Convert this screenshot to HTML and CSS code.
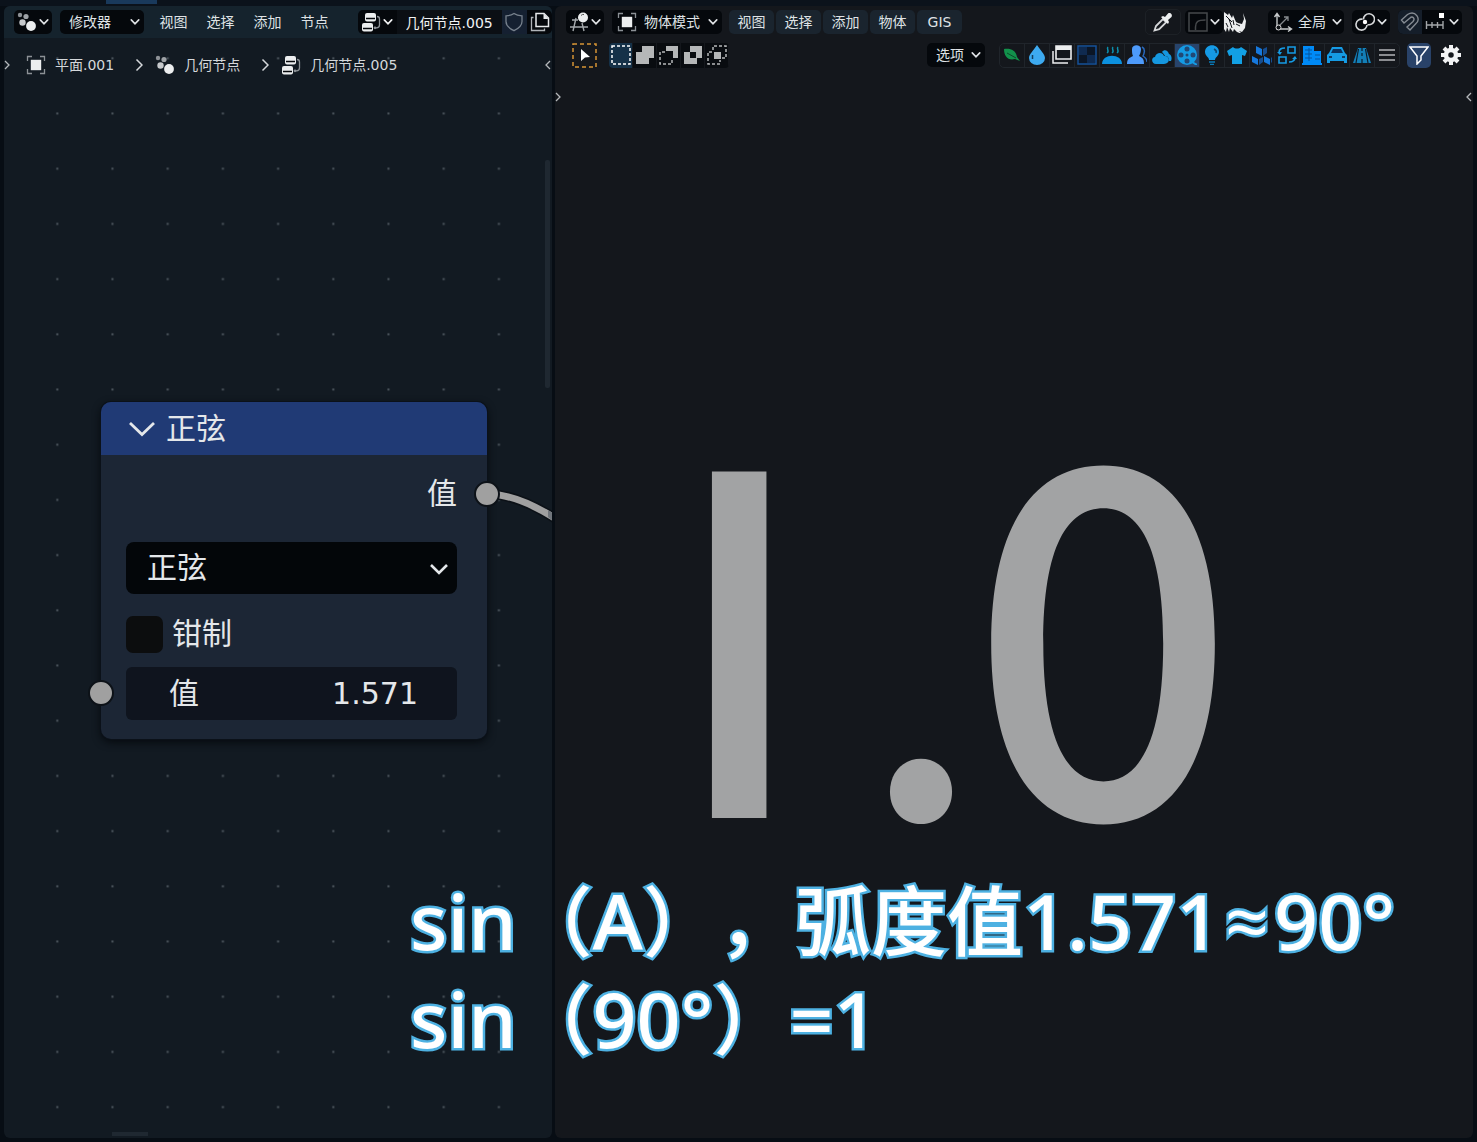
FILE: index.html
```html
<!DOCTYPE html>
<html lang="zh-CN">
<head>
<meta charset="utf-8">
<title>几何节点 - 正弦</title>
<meta name="viewport" content="width=device-width, initial-scale=1">
<link rel="stylesheet" href="styles.css">
</head>
<body>
<svg class="defs" aria-hidden="true">
  <symbol id="chev" viewBox="0 0 8 8"><path d="M1 2.3 4 5.4 7 2.3" fill="none" stroke="currentColor" stroke-width="1.3" stroke-linecap="round"/></symbol>
  <symbol id="right" viewBox="0 0 8 14"><path d="M1.5 1.5 7 7 1.5 12.500" fill="none" stroke="currentColor" stroke-width="1.500"/></symbol>
  <symbol id="geo" viewBox="0 0 20 20"><circle cx="3" cy="3" r="2.200" fill="#8d9196"/><circle cx="9" cy="4.500" r="2.600" fill="#9ea2a6"/><circle cx="5.500" cy="10.500" r="3.200" fill="#c6c9cc"/><circle cx="14" cy="14" r="4.900" fill="#eceeef"/></symbol>
  <symbol id="object" viewBox="0 0 20 20"><path d="M1.500 6V1.500H6M14 1.500h4.500V6M18.500 14v4.500H14M6 18.500H1.500V14" fill="none" stroke="#8c9196" stroke-width="1.300"/><rect x="4.800" y="4.800" width="10.400" height="10.400" fill="#eceeef"/></symbol>
  <symbol id="tree" viewBox="0 0 20 20"><rect x="4" y="1" width="11" height="8.500" rx="2" fill="#eceeef"/><rect x="1" y="11" width="11" height="8.500" rx="2" fill="#eceeef"/><path d="M5 6.500h9M2 16.500h9" stroke="#06090c" stroke-width="1.300"/><path d="M16 4.500c2 0 2.500.800 2.500 2.500v6c0 2-.800 2.800-3 2.800H14" fill="none" stroke="#8c9196" stroke-width="1.300"/><circle cx="14" cy="15.800" r="1.400" fill="#8c9196"/></symbol>
</svg>

<div class="topstrip"><span class="tab"></span></div>
<main class="app">
  <section class="area nodes">
    <svg class="grid" aria-hidden="true"><defs><pattern id="dots" x="25.300" y="79.500" width="55.200" height="55.200" patternUnits="userSpaceOnUse"><rect x="27" y="27" width="2" height="2" fill="#4d565e"/></pattern></defs><rect width="100%" height="100%" fill="url(#dots)"/></svg>
    <header class="bar node-bar">
      <button class="ctl icon-menu" aria-label="编辑器类型"><svg class="i20"><use href="#geo"/></svg><svg class="i10"><use href="#chev"/></svg></button>
      <label class="ctl drop modifier"><select aria-label="节点树类型"><option>修改器</option></select><svg class="i10"><use href="#chev"/></svg></label>
      <nav class="menus"><button>视图</button><button>选择</button><button>添加</button><button>节点</button></nav>
      <div class="ctl datablock">
        <button class="browse" aria-label="浏览节点树"><svg class="i20"><use href="#tree"/></svg><svg class="i10"><use href="#chev"/></svg></button>
        <input class="name" aria-label="节点树名称" value="几何节点.005">
        <button class="shield" aria-label="伪用户"><svg class="i20" viewBox="0 0 20 20"><path d="M10 1.500c2.200 1.700 4.700 2.300 8 2.300v5.700c0 4.500-3.500 7-8 9.200-4.500-2.200-8-4.700-8-9.200V3.800c3.300 0 5.800-.600 8-2.300z" fill="none" stroke="#77818d" stroke-width="1.300"/></svg></button>
        <button class="copy" aria-label="复制"><svg class="i20" viewBox="0 0 20 20"><path d="M6 1.500h8l4.500 4.500v8.500H6z" fill="none" stroke="#e8eaec" stroke-width="1.500"/><path d="M13.500 1.500V7h5z" fill="#e8eaec"/><path d="M3.500 5.500h-2v13h13v-2" fill="none" stroke="#b0b4b8" stroke-width="1.300"/></svg></button>
      </div>
    </header>
    <div class="crumbs">
      <svg class="edge" viewBox="0 0 8 14"><path d="m2 3 4 4-4 4" fill="none" stroke="currentColor" stroke-width="1.300"/></svg>
      <svg class="i20"><use href="#object"/></svg><span class="crumb first">平面.001</span>
      <svg class="sep"><use href="#right"/></svg>
      <svg class="i20"><use href="#geo"/></svg><span class="crumb">几何节点</span>
      <svg class="sep"><use href="#right"/></svg>
      <svg class="i20"><use href="#tree"/></svg><span class="crumb">几何节点.005</span>
      <svg class="edge last" viewBox="0 0 8 14"><path d="M6 3 2 7l4 4" fill="none" stroke="currentColor" stroke-width="1.300"/></svg>
    </div>
    <svg class="link" viewBox="0 0 66 50" aria-hidden="true"><path d="M0 15C22 15 45 24 72 42" fill="none" stroke="#0c1117" stroke-width="10"/><path d="M0 15C22 15 45 24 72 42" fill="none" stroke="#a0a0a0" stroke-width="7"/><path d="m61 31 5 3v8l-5-4z" fill="#70757b"/></svg>
    <article class="node">
      <h1 class="node-title"><svg class="fold" viewBox="0 0 28 16"><path d="M2 2 14 13.500 26 2" fill="none" stroke="currentColor" stroke-width="2.800"/></svg>正弦</h1>
      <div class="node-body">
        <div class="output">值</div>
        <label class="node-drop"><select aria-label="运算"><option>正弦</option></select><svg class="i20" viewBox="0 0 20 20"><path d="m2 7 8 8 8-8" fill="none" stroke="currentColor" stroke-width="2.600"/></svg></label>
        <label class="clamp"><input type="checkbox">钳制</label>
        <label class="value"><span>值</span><input value="1.571"></label>
      </div>
      <i class="socket out"></i><i class="socket in"></i>
    </article>
    <i class="scroll-y"></i><i class="scroll-x"></i>
  </section>

  <section class="area view">
    <header class="bar view-bar">
      <button class="ctl icon-menu" aria-label="编辑器类型"><svg class="i20" viewBox="0 0 20 20"><path d="M3 8h6M1 15h18M7 6 4 19M13 11l2 8" stroke="#a4a8ac" stroke-width="1.400"/><circle cx="14" cy="5.500" r="5" fill="#eceeef"/><path d="M12 3.500a3 3 0 0 1 3-1" fill="none" stroke="#555" stroke-width="1"/></svg><svg class="i10"><use href="#chev"/></svg></button>
      <label class="ctl drop mode"><svg class="i20"><use href="#object"/></svg><select aria-label="模式"><option>物体模式</option></select><svg class="i10"><use href="#chev"/></svg></label>
      <nav class="menus raised"><button>视图</button><button>选择</button><button>添加</button><button>物体</button><button>GIS</button></nav>
      <div class="tools">
        <button class="picker" aria-label="吸管"><svg class="i20" viewBox="0 0 20 20"><path d="M1.500 18.500 3 14l7-7 3.200 3.200-7 7z" fill="none" stroke="#d5d7d9" stroke-width="1.800"/><path d="m8 5 2-1 2 1 3-3.500c2-1.500 5 1 3.500 3.500L15 8l1 2-1 2z" fill="#eceeef"/></svg></button>
        <button class="ctl icon-menu" aria-label="曲线"><svg class="i20" viewBox="0 0 20 20"><path d="M1 1h18v18H1zM7.500 18v-3c0-5 2-7 10-7" fill="none" stroke="#45484b" stroke-width="1.500"/></svg><svg class="i10"><use href="#chev"/></svg></button>
        <button class="beast" aria-label="笔刷"><svg viewBox="0 0 22 22"><path d="M0 1 4 4 5 2l3 5 1-3 3 7 2 1 4 1 2-5-1-6 3 8-1 7-3 4-3-1 3 3-5-2-3-3-1 3-3-4-1 4-2-5-1 5-2-3-1 3z" fill="#eceeef"/><path d="m5 8 3 9M2 5l6 6M12 13l4 2M2 12l2 4M9 9l1 5" stroke="#111419"/></svg></button>
        <label class="ctl drop orient"><svg class="i20" viewBox="0 0 20 20"><path d="M4 2v15h14M1.500 5 4 1.500 6.500 5M15 14.500l3.500 2.500-3.500 2.500" fill="none" stroke="#c7cacc" stroke-width="1.400"/><path d="m6 14 9-9m-4 0h4v4" fill="none" stroke="#85898d" stroke-width="1.300"/><circle cx="5.500" cy="15.500" r="2.500" fill="#101317" stroke="#ddd"/></svg><select aria-label="坐标系"><option>全局</option></select><svg class="i10"><use href="#chev"/></svg></label>
        <button class="ctl icon-menu" aria-label="轴心点"><svg class="i20" viewBox="0 0 20 20"><path d="M7.500 7.200A5.500 5.500 0 1 0 12 13M8.500 7.500a5.500 5.500 0 1 1 4 5" fill="none" stroke="#d5d7d9" stroke-width="1.600"/><circle cx="10" cy="10" r="2.200" fill="#fff"/></svg><svg class="i10"><use href="#chev"/></svg></button>
        <div class="snap"><button class="magnet" aria-label="吸附"><svg class="i20" viewBox="0 0 20 20"><path d="m1.500 8 6-5.500c8-5 14 5 8.500 9L10 18l-3-3 6-5.500c2.500-3-.500-6-3-3.500l-6 5z" fill="none" stroke="#858b93" stroke-width="1.400"/></svg></button><button class="increment" aria-label="吸附到"><svg class="i20" viewBox="0 0 20 20"><path d="M1 13h17M1.500 9v8M7 10v6M12.500 10v6M18 9v8" stroke="#a3a6a9" stroke-width="1.400"/><path d="M14 1h5v5h-5z" fill="#fff"/></svg><svg class="i10"><use href="#chev"/></svg></button></div>
      </div>
    </header>
    <div class="bar settings">
      <button class="cursor" aria-label="选择工具"><svg viewBox="0 0 25 25"><path d="M1 1h23v23H1z" fill="none" stroke="#d69534" stroke-width="1.500" stroke-dasharray="4 3"/><path d="m9 6 9 8-5 .500L9 18z" fill="#fff"/></svg></button>
      <div class="modes">
        <button class="on" aria-label="设置"><svg viewBox="0 0 20 20"><path d="M1 1h18v18H1z" fill="none" stroke="#fff" stroke-width="1.500" stroke-dasharray="3 2"/></svg></button>
        <button aria-label="扩展"><svg viewBox="0 0 20 20"><path d="M7 1h12v12h-5v6H1V7h6z" fill="#b5b7b8"/></svg></button>
        <button aria-label="减去"><svg viewBox="0 0 20 20"><path d="M7 1h12v12h-5V6H7z" fill="#b5b7b8"/><path d="M6 7H1v12h12v-5" fill="none" stroke="#b5b7b8" stroke-width="1.500" stroke-dasharray="3 2"/></svg></button>
        <button aria-label="反转"><svg viewBox="0 0 20 20"><path fill-rule="evenodd" d="M7 1h12v12h-5v6H1V7h6zM7 7v6h6V7z" fill="#b5b7b8"/></svg></button>
        <button aria-label="相交"><svg viewBox="0 0 20 20"><path d="M7 7h7v7H7z" fill="#b5b7b8"/><path d="M6 5V1h13v12h-4M5 7H1v12h12v-4" fill="none" stroke="#b5b7b8" stroke-width="1.500" stroke-dasharray="3 2"/></svg></button>
      </div>
      <label class="ctl drop options"><select aria-label="选项"><option>选项</option></select><svg class="i10"><use href="#chev"/></svg></label>
      <div class="packs">
        <button aria-label="植物"><svg viewBox="0 0 20 20"><path d="M2 4c6-1 12 1 13 8l3 4-5-2C6 16 2 11 2 4z" fill="#12914b"/><path d="m5 8 9 5" stroke="#0b4a2a"/></svg></button>
        <button aria-label="水"><svg viewBox="0 0 20 20"><path d="M10 0c3 5 8 9 8 13a8 7 0 0 1-16 0c0-4 5-8 8-13z" fill="#3daaf0"/><path d="M5.500 10v4" stroke="#124062" stroke-width="1.500"/></svg></button>
        <button aria-label="窗口"><svg viewBox="0 0 20 20"><path d="M4 1h15v13H4z" fill="none" stroke="#eceeef" stroke-width="1.600"/><path d="M4 1h15v4H4z" fill="#eceeef"/><path d="M1 6v12h15" fill="none" stroke="#eceeef" stroke-width="1.500"/></svg></button>
        <button aria-label="棋盘"><svg viewBox="0 0 20 20"><path d="M1 1h18v18H1z" fill="#0b1626" stroke="#155199" stroke-width="1.500"/><path d="M2 2h8v8H2zM10 10h8v8h-8z" fill="#0f2a50"/></svg></button>
        <button aria-label="蒸汽"><svg viewBox="0 0 20 20"><path d="M0 19c0-11 20-11 20 0z" fill="#0c91df"/><path d="M5 8c3-2-1-4 1-6M10 8c3-2-1-4 1-6M15 8c3-2-1-4 1-6" fill="none" stroke="#0c91af" stroke-width="1.500"/></svg></button>
        <button aria-label="人物"><svg viewBox="0 0 20 20"><path d="M5 4c0-5 9-5 9 0 0 3-1 5-2 7 4 2 5 3 5 8H0c0-5 2-6 6-8-1-2-1-4-1-7z" fill="#4d9afa"/><path d="M15 2c4 2 2 7 1 9 3 2 4 4 4 6" fill="none" stroke="#2868bc" stroke-width="1.500"/></svg></button>
        <button aria-label="云"><svg viewBox="0 0 20 20"><path d="M4 19c-5 0-5-7-1-7 1-5 8-5 9-1 6-1 7 8 0 8z" fill="#1597df"/><path d="M10 7c2-3 6-2 7 2 3 1 3 5 2 7h-2c0-4-2-5-4-5-1-2-2-3-3-4z" fill="#1597df"/></svg></button>
        <button class="on" aria-label="电影"><svg viewBox="0 0 20 20"><circle cx="10" cy="10" r="10" fill="#149be4"/><g fill="#214875"><circle cx="10" cy="4" r="2.500"/><circle cx="10" cy="16" r="2.500"/><circle cx="4" cy="10" r="2.500"/><circle cx="16" cy="10" r="2.500"/><circle cx="10" cy="10" r="1.500"/></g><path d="m15 17 5 3" stroke="#149be4" stroke-width="2"/></svg></button>
        <button aria-label="灯"><svg viewBox="0 0 20 20"><path d="M7 15c0-3-4-4-4-8C3-2 17-2 17 7c0 4-4 5-4 8z" fill="#159ae5"/><path d="M7 17h6M8 19.500h4" stroke="#087bb9" stroke-width="1.500"/><path d="M12 4c2 1 3 2 2 4" fill="none" stroke="#0d4975" stroke-width="1.500"/></svg></button>
        <button aria-label="衣服"><svg viewBox="0 0 20 20"><path d="M6 2c2 2 6 2 8 0l6 4-2 5-3-1v9H5v-9l-3 1-2-5z" fill="#12a0e4"/></svg></button>
        <button aria-label="方块"><svg viewBox="0 0 20 20"><path d="m4 1 6 3v7L4 8zM0 11l6 3v6l-6-3zM12 11l6 3v6l-6-3z" fill="#1678dc"/><path d="m11 4 4-2v6l-4 3zM7 14l4-2v5l-4 3zM19 13l1-1v5l-1 1z" fill="#164e91"/></svg></button>
        <button aria-label="交换"><svg viewBox="0 0 20 20"><path d="M11 2h7v6h-7zM2 12h7v6H2zM2 8c0-4 2-5 6-5M18 12c0 4-2 5-6 5" fill="none" stroke="#159be4" stroke-width="1.600"/><path d="m0 7 3 3 2-3M15 14l3-3 2 3" fill="#159be4"/></svg></button>
        <button aria-label="建筑"><svg viewBox="0 0 20 20"><path d="M1 19V1h11v5h7v13z" fill="#008af6"/><path d="M3 5h7M3 9h7M3 13h7M13 10h5M13 14h5M7 3v13" stroke="#07549b"/><path d="M0 19h20" stroke="#008af6" stroke-width="2"/></svg></button>
        <button aria-label="汽车"><svg viewBox="0 0 20 20"><path d="m2 8 3-6h10l3 6 2 2v8h-3v-2H3v2H0v-8z" fill="#159be4"/><path d="M4 8h12l-2-4H6z" fill="#0c315c"/><path d="M2 12h3M15 12h3" stroke="#113a63" stroke-width="2"/></svg></button>
        <button aria-label="道路"><svg viewBox="0 0 20 20"><path d="M6 3h8l5 15H1z" fill="#137fb7"/><path d="M10 3v3m0 2v3m0 3v4M6.500 4 4 18M13.500 4 16 18" stroke="#0c1a28" stroke-width="1.200"/></svg></button>
        <button aria-label="列表"><svg viewBox="0 0 20 20"><path d="M2 5h16M2 10h16M2 15h16" stroke="#b2b5b8" stroke-width="1.300"/></svg></button>
      </div>
      <button class="filter" aria-label="过滤"><svg class="i20" viewBox="0 0 20 20"><path d="M1 2h18l-7 9v4l-4 4v-8z" fill="none" stroke="#fff" stroke-width="1.500"/></svg></button>
      <button class="gear" aria-label="设置"><svg class="i20" viewBox="0 0 20 20"><circle cx="10" cy="10" r="5" fill="none" stroke="#f2f3f4" stroke-width="4.500"/><path d="M10 0v4m0 12v4M0 10h4m12 0h4M3 3l3 3m8 8 3 3M17 3l-3 3m-8 8-3 3" stroke="#f2f3f4" stroke-width="4"/></svg></button>
    </div>
    <div class="edges"><svg class="edge" viewBox="0 0 8 14"><path d="m2 3 4 4-4 4" fill="none" stroke="currentColor" stroke-width="1.300"/></svg><svg class="edge" viewBox="0 0 8 14"><path d="M6 3 2 7l4 4" fill="none" stroke="currentColor" stroke-width="1.300"/></svg></div>
    <div class="result"><span>I</span><span class="point">.</span><span>0</span></div>
  </section>
</main>
<p class="caption">sin<b>（</b>A<b>），弧度值</b>1.571<span class="approx">≈</span>90°<br>sin<b>（</b>90°<b>）</b>=1</p>
</body>
</html>
```
FILE: styles.css
```css
* { box-sizing: border-box; }
body {
  margin: 0;
  min-height: 100vh;
  display: flex;
  flex-direction: column;
  position: relative;
  overflow: hidden;
  background: #070d14;
  color: #dfe2e5;
  font: 14px/20px "DejaVu Sans", "Noto Sans CJK SC", sans-serif;
}
svg { display: block; flex: none; }
button, input, select { font: inherit; color: inherit; border: 0; padding: 0; margin: 0; background: none; }
select { appearance: none; flex: 1; min-width: 0; }
button { display: flex; align-items: center; justify-content: center; white-space: nowrap; }
.defs { position: absolute; width: 0; height: 0; }
.i20 { width: 20px; height: 20px; }
.i10 { width: 10px; height: 10px; }

.topstrip { height: 6px; background: #0b121b; padding-left: 106px; }
.tab { display: block; width: 51px; height: 4px; background: #19395b; }
.app { flex: 1; display: grid; grid-template-columns: 548fr 918fr; gap: 3px; padding: 0 4px 4px; }
.area { position: relative; overflow: hidden; border-radius: 6px; min-width: 0; }
.nodes { background: #121a22; }
.view { background: #14171c; }
.grid { position: absolute; inset: 0; width: 100%; height: 100%; }

.bar { position: relative; display: flex; align-items: center; }
.node-bar { height: 32px; padding-left: 10px; background: #15232d; }
.ctl { height: 24px; background: #05080c; border-radius: 5px; display: flex; align-items: center; }
.icon-menu { width: 38px; gap: 2px; }
.drop { padding: 0 4px 0 9px; }
.modifier { width: 84px; margin-left: 8px; }
.menus { display: flex; }
.node-bar .menus { margin-left: 6px; }
.node-bar .menus button { width: 47px; height: 24px; }
.datablock { margin-left: 20px; flex: 1; min-width: 0; color: #f2f3f4; }
.browse { width: 39px; gap: 2px; }
.name { width: 105px; height: 24px; padding-left: 9px; background: #0b0f14; }
.shield { width: 26px; height: 24px; background: #152031; }
.copy { width: 25px; }

.crumbs { position: relative; display: flex; align-items: center; height: 54px; color: #d5d8db; }
.edge { width: 8px; height: 14px; color: #b5b8bb; }
.crumbs .edge:first-child { margin-right: 15px; margin-left: -1px; }
.crumb { margin-left: 9px; }
.sep { width: 8px; height: 14px; margin: 0 12px 0 21px; }
.crumbs .last { margin-left: auto; }

.node { position: absolute; left: 97px; top: 396px; width: 386px; background: #1c2635; border-radius: 10px; box-shadow: 0 0 0 1px #0b1119, 0 3px 9px #05090d; font-size: 30px; line-height: 44px; color: #e4e7ea; }
.node-title { display: flex; align-items: center; gap: 10px; height: 53px; margin: 0; padding-left: 27px; background: #203a75; border-radius: 10px 10px 0 0; font-size: 30px; font-weight: 400; }
.fold { width: 28px; height: 16px; }
.node-body { padding: 17px 30px 19px 25px; display: flex; flex-direction: column; }
.output { height: 44px; text-align: right; margin-bottom: 26px; }
.node-drop { display: flex; align-items: center; height: 52px; padding: 0 8px 0 21px; background: #030609; border-radius: 8px; }
.clamp { display: flex; align-items: center; gap: 9px; height: 44px; margin: 18px 0 11px; }
.clamp input { appearance: none; width: 37px; height: 37px; border-radius: 7px; background: #0c0d0e; }
.value { display: flex; align-items: center; justify-content: space-between; height: 53px; padding: 0 39px 0 43px; background: #0f141e; border-radius: 6px; }
.value input { width: 130px; text-align: right; }
.socket { position: absolute; width: 26px; height: 26px; border-radius: 50%; background: #a0a0a0; border: 2px solid #0d1218; }
.out { top: 79px; right: -13px; }
.in { top: 278px; left: -13px; }
.link { position: absolute; left: 483px; top: 473px; width: 66px; height: 50px; }
.scroll-y { position: absolute; right: 2px; top: 154px; width: 5px; height: 228px; background: #1f2831; border-radius: 2px; }
.scroll-x { position: absolute; left: 108px; bottom: 2px; width: 36px; height: 4px; background: #1f2831; }

.view-bar { height: 32px; padding: 0 11px; }
.mode { width: 110px; margin-left: 8px; padding-left: 5px; gap: 7px; }
.raised { gap: 2px; margin-left: 7px; }
.raised button { width: 45px; height: 24px; background: #1a242e; border-radius: 5px; }
.tools { margin-left: auto; display: flex; align-items: center; }
.picker { width: 36px; height: 26px; border: 1px solid #1d2126; border-radius: 5px; margin-right: 4px; }
.beast { width: 22px; height: 24px; margin: 0 22px 0 1px; }
.beast svg { width: 22px; height: 22px; }
.orient { width: 76px; margin-right: 8px; padding: 0 2px 0 5px; gap: 5px; }
.snap { display: flex; height: 24px; margin-left: 8px; border-radius: 5px; overflow: hidden; background: #05080c; }
.magnet { width: 24px; background: #151e2a; }
.increment { width: 40px; gap: 4px; }

.settings { height: 34px; padding: 0 10px 0 17px; }
.settings > button, .settings .modes, .settings .packs { height: 25px; }
.cursor, .cursor svg { width: 25px; height: 25px; }
.modes { display: flex; margin-left: 12px; background: #090c10; border-radius: 4px; overflow: hidden; }
.modes button { width: 24px; border-right: 1px solid #14171c; }
.modes svg, .packs svg { width: 20px; height: 20px; }
.modes .on { background: #153148; }
.options { width: 58px; margin-left: auto; margin-right: 14px; }
.packs { display: flex; border: 1px solid #20252b; border-radius: 5px; }
.packs button { width: 25px; border-right: 1px solid #20252b; }
.packs button:last-child { border: 0; width: 24px; }
.packs .on { background: #28446b; }
.filter { width: 24px; background: #294268; border-radius: 5px; margin-left: 7px; }
.gear { width: 24px; margin-left: 8px; border-radius: 5px; }
.edges { display: flex; justify-content: space-between; margin-top: 18px; margin-left: -1px; }

.result { position: absolute; top: 367px; left: 93px; display: grid; grid-template-columns: repeat(3, 182px); font: 500 470px/480px "Noto Sans CJK SC", sans-serif; color: #a2a3a4; }
.result span { display: flex; justify-content: center; }
.result .point { font-weight: 400; }

.caption { position: absolute; left: 410px; top: 872px; margin: 0; white-space: nowrap; font: 500 77px/98px "Noto Sans", "Noto Sans CJK SC", sans-serif; color: #fff; -webkit-text-stroke: 5px #4db1e2; paint-order: stroke fill; text-spacing-trim: space-all; }
.caption b { font: 500 76px/0 "Noto Sans CJK SC", sans-serif; }
.approx { padding: 0 5px; font-family: "Open Sans", sans-serif; line-height: 0; }
```
